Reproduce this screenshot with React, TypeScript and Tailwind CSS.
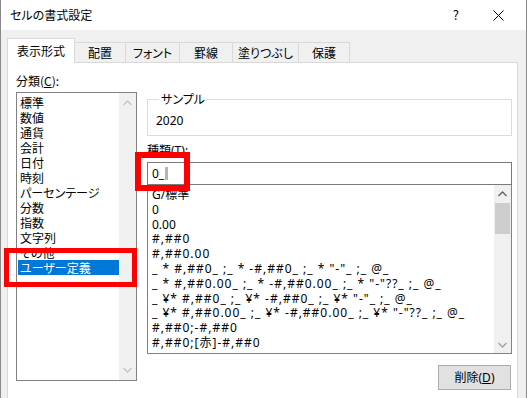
import React from 'react';

const categories = [
  '標準',
  '数値',
  '通貨',
  '会計',
  '日付',
  '時刻',
  'パーセンテージ',
  '分数',
  '指数',
  '文字列',
  'その他',
  'ユーザー定義',
];

const formats = [
  'G/標準',
  '0',
  '0.00',
  '#,##0',
  '#,##0.00',
  '_ * #,##0_ ;_ * -#,##0_ ;_ * "-"_ ;_ @_ ',
  '_ * #,##0.00_ ;_ * -#,##0.00_ ;_ * "-"??_ ;_ @_ ',
  '_ ¥* #,##0_ ;_ ¥* -#,##0_ ;_ ¥* "-"_ ;_ @_ ',
  '_ ¥* #,##0.00_ ;_ ¥* -#,##0.00_ ;_ ¥* "-"??_ ;_ @_ ',
  '#,##0;-#,##0',
  '#,##0;[赤]-#,##0',
];

const tabs = [
  { label: '配置', w: 'w-[51px]' },
  { label: 'フォント', w: 'w-[54px]' },
  { label: '罫線', w: 'w-[53px]' },
  { label: '塗りつぶし', w: 'w-[66px]' },
  { label: '保護', w: 'w-[51px]' },
];

function Chevron({ up, color }: { up?: boolean; color: string }) {
  return (
    <svg width="9" height="6" viewBox="0 0 9 6">
      <path
        d={up ? 'M0.5 5 L4.5 1 L8.5 5' : 'M0.5 1 L4.5 5 L8.5 1'}
        fill="none"
        stroke={color}
        strokeWidth="1.3"
      />
    </svg>
  );
}

export default function App() {
  return (
    <div className="w-[527px] h-[398px] overflow-hidden relative flex flex-col bg-[#f0f0f0] border-x border-[#8a8a8a] text-[12px] text-black font-['Noto_Sans_CJK_JP',sans-serif] [font-feature-settings:'palt']">
      {/* title bar */}
      <div className="h-[30px] bg-white flex items-center pl-[9px] pr-[22px] shrink-0">
        <span className="flex-1">セルの書式設定</span>
        <span className="mr-[34px] text-[13px]">?</span>
        <svg width="11" height="11" viewBox="0 0 11 11">
          <path d="M0.5 0.5 L10.5 10.5 M10.5 0.5 L0.5 10.5" stroke="#000" strokeWidth="1" />
        </svg>
      </div>

      {/* tabs */}
      <div className="flex items-end h-[32px] pl-[6px] shrink-0">
        <div className="w-[68px] h-[25px] bg-white border-x border-t border-[#d9d9d9] flex items-center justify-center -mb-px relative z-10">
          表示形式
        </div>
        {tabs.map((t) => (
          <div
            key={t.label}
            className={`${t.w} h-[20px] border-t border-r border-[#d9d9d9] flex items-center justify-center`}
          >
            {t.label}
          </div>
        ))}
      </div>

      {/* panel */}
      <div className="flex-1 ml-[6px] mr-[8px] bg-white border-x border-t border-[#d9d9d9] flex pl-[8px]">
        {/* category column */}
        <div className="flex flex-col pt-[10px]">
          <div className="leading-[15px]">
            分類(<span className="underline">C</span>):
          </div>
          <div className="mt-[4px] w-[121px] h-[289px] border border-[#828282] flex">
            <div className="flex-1 pt-[2px] pl-px">
              {categories.map((c, i) => (
                <div
                  key={c}
                  className={`h-[15px] leading-[15px] pl-[2px] whitespace-nowrap ${
                    i === categories.length - 1 ? 'bg-[#0078d7] text-white' : ''
                  }`}
                >
                  {c}
                </div>
              ))}
            </div>
            <div className="w-[17px] bg-[#f0f0f0] flex flex-col items-center justify-between py-[7px]">
              <Chevron up color="#c4c4c4" />
              <Chevron color="#c4c4c4" />
            </div>
          </div>
        </div>

        {/* type column */}
        <div className="ml-[10px] w-[365px] flex flex-col pt-[29px] font-['Noto_Sans','Noto_Sans_CJK_JP',sans-serif]">
          <fieldset className="border border-[#dcdcdc] h-[44px] pl-[8px]">
            <legend className="ml-[3px] px-[2px] leading-[15px]">サンプル</legend>
            <div className="mt-[6px] leading-[15px]">2020</div>
          </fieldset>
          <div className="mt-[7px] leading-[15px]">
            種類(<span className="underline">T</span>):
          </div>
          <div className="mt-[4px] h-[23px] border border-[#7a7a7a] flex items-center pl-[4px]">
            <span>0_</span>
            <span className="ml-[1px] w-[3px] h-[13px] bg-[#b4b4b4]" />
          </div>
          <div className="h-[169px] border-x border-b border-[#828282] flex">
            <div className="flex-1 pt-[3px] pl-[4px] overflow-hidden">
              {formats.map((f) => (
                <div
                  key={f}
                  className={`h-[14.8px] leading-[14px] whitespace-pre ${
                    f.includes('#') ? 'tracking-[1px]' : ''
                  }`}
                >
                  {f}
                </div>
              ))}
            </div>
            <div className="w-[17px] bg-[#f0f0f0] flex flex-col items-center">
              <div className="h-[17px] flex items-center justify-center">
                <Chevron up color="#606060" />
              </div>
              <div className="mt-px w-[15px] h-[31px] bg-[#cdcdcd]" />
              <div className="flex-1" />
              <div className="h-[17px] flex items-center justify-center">
                <Chevron color="#a0a0a0" />
              </div>
            </div>
          </div>
          <div className="flex justify-end mt-[11px] pr-px">
            <button className="w-[73px] h-[25px] bg-[#e1e1e1] border border-[#adadad] flex items-center justify-center">
              削除(<span className="underline">D</span>)
            </button>
          </div>
        </div>
      </div>

      {/* red highlight annotations */}
      <div className="absolute left-[3px] top-[248px] w-[133px] h-[39px] border-[5px] border-[#ff0000]" />
      <div className="absolute left-[134px] top-[152px] w-[55px] h-[39px] border-[6px] border-[#ff0000]" />
    </div>
  );
}
